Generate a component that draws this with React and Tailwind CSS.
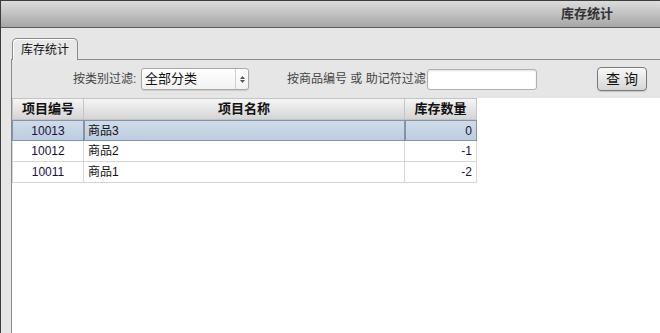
import React from "react";

const font = { fontFamily: '"Liberation Sans", "Noto Sans CJK SC", sans-serif' };

const rows = [
  { id: "10013", name: "商品3", qty: "0", sel: true },
  { id: "10012", name: "商品2", qty: "-1" },
  { id: "10011", name: "商品1", qty: "-2" },
];

export default function App() {
  return (
    <div
      className="w-[660px] h-[333px] overflow-hidden flex flex-col bg-[#e6e6e6] border-l border-t border-[#3c3c3c] text-[#222]"
      style={font}
    >
      {/* title bar */}
      <div className="h-[27px] shrink-0 flex items-center justify-end pr-[47px] bg-gradient-to-b from-[#dcdcdc] to-[#a6a6a6] border-b border-[#5a5a5a]">
        <span className="text-[13px] font-bold text-[#333] tracking-[0px]">库存统计</span>
      </div>

      {/* body */}
      <div className="flex-1 flex flex-col pl-[10px] pt-[10px] min-h-0">
        {/* tab */}
        <div className="flex">
          <div className="ml-[1px] w-[66px] h-[22px] -mb-[1px] relative z-10 rounded-t-[5px] border border-b-0 border-[#8a8a8a] bg-[#e8e8e8] flex items-center justify-center text-[12px] text-[#111] shadow-[inset_1px_1px_0_#ffffff]">
            库存统计
          </div>
        </div>
        {/* panel */}
        <div className="flex-1 flex flex-col border-t border-l border-[#8a8a8a] min-h-0">
          {/* toolbar */}
          <div className="h-[38px] shrink-0 flex items-center pl-[61px] text-[12px] text-[#444]">
            <span className="w-[68px]">按类别过滤:</span>
            <div className="w-[108px] h-[22px] rounded-[3px] border border-[#a8a8a8] bg-gradient-to-b from-[#ffffff] to-[#f2f2f2] flex items-stretch shadow-[0_1px_1px_rgba(0,0,0,0.12)]">
              <span className="flex-1 flex items-center pl-[3px] text-[13px] text-[#111]">全部分类</span>
              <span className="w-[13px] border-l border-[#d0d0d0] flex flex-col items-center justify-center gap-[1px]">
                <svg width="5" height="3" viewBox="0 0 5 3"><path d="M0 3 L2.5 0 L5 3 Z" fill="#555" /></svg>
                <svg width="5" height="3" viewBox="0 0 5 3"><path d="M0 0 L2.5 3 L5 0 Z" fill="#555" /></svg>
              </span>
            </div>
            <span className="ml-[38px] w-[140px]">按商品编号 或 助记符过滤</span>
            <div className="w-[110px] h-[21px] rounded-[3px] border border-[#b0b0b0] bg-white shadow-[inset_0_1px_2px_rgba(0,0,0,0.12)]" />
            <button className="ml-[60px] w-[50px] h-[24px] rounded-[4px] border border-[#7a7a7a] bg-gradient-to-b from-[#f8f8f8] to-[#d6d6d6] text-[14px] text-[#111] flex items-center justify-center shadow-[0_1px_1px_rgba(0,0,0,0.15)]">
              查 询
            </button>
          </div>

          {/* grid area */}
          <div className="flex-1 bg-white">
            <div className="w-[465px] text-[12px]">
              <div className="flex h-[22px] border-t border-b border-[#c4c4c4] bg-gradient-to-b from-[#f6f6f6] to-[#d4d4d4] font-bold text-[13px] text-[#111]">
                <div className="w-[72px] border-r border-l border-[#c4c4c4] flex items-center justify-center">项目编号</div>
                <div className="w-[321px] border-r border-[#c4c4c4] flex items-center justify-center">项目名称</div>
                <div className="w-[72px] border-r border-[#c4c4c4] flex items-center justify-center">库存数量</div>
              </div>
              {rows.map((r) =>
                r.sel ? (
                  <div key={r.id} className="flex h-[21px] bg-gradient-to-b from-[#cfdcea] to-[#bccce0] text-[#1a1040]">
                    <div className="w-[72px] border border-[#8493a6] flex items-center justify-center">{r.id}</div>
                    <div className="w-[321px] border border-[#8493a6] flex items-center pl-[3px] text-[#111]">{r.name}</div>
                    <div className="w-[72px] border border-[#8493a6] flex items-center justify-end pr-[4px]">{r.qty}</div>
                  </div>
                ) : (
                  <div key={r.id} className="flex h-[21px] border-b border-[#d6d6d6] text-[#1a1040]">
                    <div className="w-[72px] border-l border-r border-[#d6d6d6] flex items-center justify-center">{r.id}</div>
                    <div className="w-[321px] border-r border-[#d6d6d6] flex items-center pl-[4px] text-[#111]">{r.name}</div>
                    <div className="w-[72px] border-r border-[#d6d6d6] flex items-center justify-end pr-[4px]">{r.qty}</div>
                  </div>
                )
              )}
            </div>
          </div>
        </div>
      </div>
    </div>
  );
}
